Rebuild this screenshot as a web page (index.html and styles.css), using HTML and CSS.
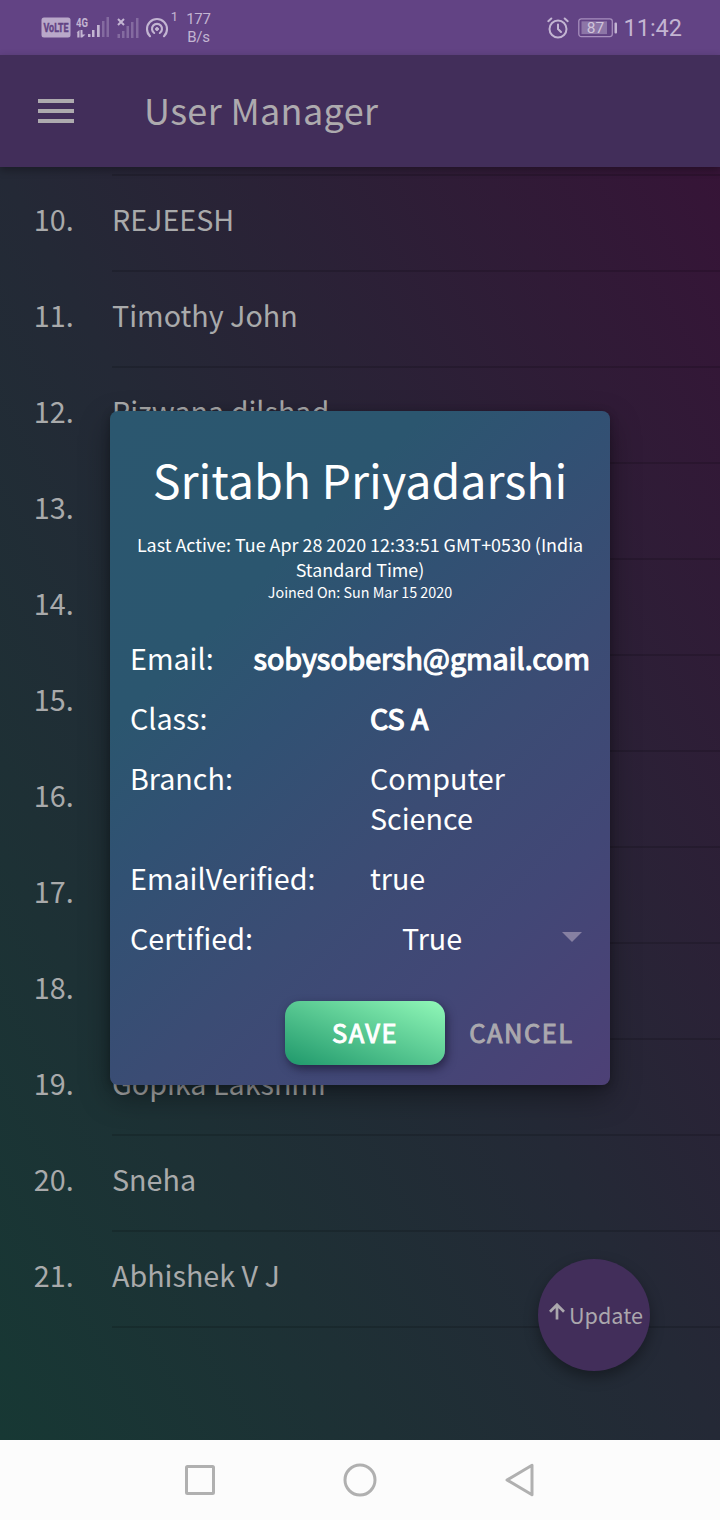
FILE: index.html
```html
<!DOCTYPE html>
<html lang="en">
<head>
<meta charset="utf-8">
<title>User Manager</title>
<link rel="stylesheet" href="styles.css">
</head>
<body>
<div class="screen">
  <header class="status">
    <div class="status-left">
      <svg class="volte" width="30" height="21" viewBox="0 0 30 21"><rect x="0.5" y="0.5" width="29" height="20" rx="2.5" fill="#b9a8c9"/><text x="2.500" y="14.600" textLength="25" lengthAdjust="spacingAndGlyphs" class="volte-text">VoLTE</text></svg>
      <svg class="signal-a" width="34" height="23" viewBox="0 0 34 23"><text x="0" y="10" textLength="12" lengthAdjust="spacingAndGlyphs" class="net-text">4G</text><g fill="#c3b5d2"><path d="M0.500 15.500l3-2.500v7.500h-2.200v-5zM4.500 13h2v4.500h3l-3.300 3h-1.700z"/><rect x="12" y="17" width="2.500" height="3"/><rect x="16" y="13" width="2.500" height="7"/><rect x="21" y="8" width="2.700" height="12"/></g><g fill="#846ba0"><rect x="26" y="4" width="2.500" height="16"/><rect x="30.500" y="0" width="2.500" height="20"/></g></svg>
      <svg class="signal-b" width="22" height="20" viewBox="0 0 22 20"><path d="M1 1l6 6M7 1l-6 6" stroke="#c3b5d2" stroke-width="2"/><g fill="#846ba0"><rect x="0.500" y="16" width="2.500" height="4"/><rect x="5" y="13" width="2.500" height="7"/><rect x="9.500" y="8" width="2.500" height="12"/><rect x="14" y="4" width="2.500" height="16"/><rect x="19" y="0" width="2.500" height="20"/></g></svg>
      <svg class="hotspot" width="24" height="22" viewBox="0 0 24 22" fill="none" stroke="#c3b5d2" stroke-width="2.100" stroke-linecap="round"><circle cx="12" cy="12" r="1.500" fill="#c3b5d2" stroke-width="1"/><path d="M9.200 16a5 5 0 1 1 5.600 0"/><path d="M5 19.200a10 10 0 1 1 14 0"/></svg>
      <span class="hot-count">1</span>
      <div class="speed"><span>177</span><span>B/s</span></div>
    </div>
    <div class="status-right">
      <svg width="22" height="22" viewBox="0 0 22 22" fill="none" stroke="#c3b5d2" stroke-width="2" stroke-linecap="round"><circle cx="11" cy="12" r="8.500"/><path d="M11 7.500v4.500l3 3M1.300 4.200l3-2.700M20.700 4.200l-3-2.700"/></svg>
      <svg class="battery" width="40" height="20" viewBox="0 0 40 20"><rect x="0.800" y="0.800" width="33.500" height="17.800" rx="2.500" fill="none" stroke="#a78fbd" stroke-width="1.300"/><rect x="3.500" y="3.300" width="25.500" height="12.800" fill="#8d76a7"/><rect x="36.500" y="4.500" width="2.500" height="11" rx="1" fill="#c3b5d2"/><text x="17.500" y="15" text-anchor="middle" class="battery-text">87</text></svg>
      <span class="clock">11:42</span>
    </div>
  </header>
  <div class="appbar">
    <svg width="36" height="24" viewBox="0 0 36 24" fill="#adaaae"><rect width="36" height="4"/><rect y="10" width="36" height="4"/><rect y="20" width="36" height="4"/></svg>
    <h1 class="app-title">User Manager</h1>
  </div>
  <main class="content">
    <ul class="list">
      <li class="row"><span class="num">10.</span><span class="name">REJEESH</span></li>
      <li class="row"><span class="num">11.</span><span class="name">Timothy John</span></li>
      <li class="row"><span class="num">12.</span><span class="name">Rizwana dilshad</span></li>
      <li class="row"><span class="num">13.</span><span class="name"></span></li>
      <li class="row"><span class="num">14.</span><span class="name"></span></li>
      <li class="row"><span class="num">15.</span><span class="name"></span></li>
      <li class="row"><span class="num">16.</span><span class="name"></span></li>
      <li class="row"><span class="num">17.</span><span class="name"></span></li>
      <li class="row"><span class="num">18.</span><span class="name"></span></li>
      <li class="row"><span class="num">19.</span><span class="name">Gopika Lakshmi</span></li>
      <li class="row"><span class="num">20.</span><span class="name">Sneha</span></li>
      <li class="row"><span class="num">21.</span><span class="name">Abhishek V J</span></li>
    </ul>
    <button class="fab"><svg width="16" height="17" viewBox="0 0 16 17" fill="none" stroke="#aba7ad" stroke-width="2.700"><path d="M8 16.500V2M1 8.700l7-7 7 7"/></svg><span>Update</span></button>
  </main>
  <nav class="navbar">
    <svg width="32" height="32" viewBox="0 0 32 32" fill="none" stroke="#b0b0b0" stroke-width="3"><rect x="2.500" y="2.500" width="27" height="27" rx="1"/></svg>
    <svg width="34" height="34" viewBox="0 0 34 34" fill="none" stroke="#b0b0b0" stroke-width="3"><circle cx="17" cy="17" r="15"/></svg>
    <svg width="32" height="34" viewBox="0 0 32 34" fill="none" stroke="#b0b0b0" stroke-width="3" stroke-linejoin="round"><path d="M28 2.200v29.600L3 17z"/></svg>
  </nav>
  <section class="dialog">
    <h2 class="person">Sritabh Priyadarshi</h2>
    <p class="active">Last Active: Tue Apr 28 2020 12:33:51 GMT+0530 (India<br>Standard Time)</p>
    <p class="joined">Joined On: Sun Mar 15 2020</p>
    <div class="fields">
      <div class="field field-email"><span>Email:</span><b class="strong">sobysobersh@gmail.com</b></div>
      <div class="field"><span>Class:</span><b class="strong">CS A</b></div>
      <div class="field"><span>Branch:</span><span>Computer<br>Science</span></div>
      <div class="field"><span>EmailVerified:</span><span>true</span></div>
      <div class="field"><span>Certified:</span><span class="select">True<i class="caret"></i></span></div>
    </div>
    <div class="actions"><button class="save">SAVE</button><button class="cancel">CANCEL</button></div>
  </section>
</div>
</body>
</html>
```

FILE: styles.css
```css
* { box-sizing: border-box; margin: 0; padding: 0; }
body { font-family: "Noto Sans CJK SC", "Noto Sans", sans-serif; }
button { border: 0; font-family: inherit; }
.screen { position: relative; width: 720px; height: 1520px; display: flex; flex-direction: column; overflow: hidden; }
.status { height: 55px; background: #624384; display: flex; justify-content: space-between; padding: 0 38px 0 41px; font-family: Roboto, sans-serif; color: #c3b5d2; }
.status-left, .status-right { display: flex; align-items: center; }
.volte { overflow: visible; }
.volte-text { font: bold 12px Roboto, sans-serif; fill: #624384; stroke: #624384; stroke-width: .4px; }
.net-text { font: bold 12px Roboto, sans-serif; fill: #c3b5d2; }
.signal-a { margin: 2px 0 0 5px; }
.signal-b { margin-left: 7px; }
.hotspot { margin-left: 6px; }
.hot-count { font-size: 13px; margin: -23px 0 0 1px; width: 9px; text-align: center; }
.speed { display: flex; flex-direction: column; align-items: center; font-size: 15px; line-height: 18px; width: 25px; margin-left: 7px; padding-top: 1px; letter-spacing: -.2px; }
.battery { margin-left: 9px; }
.battery-text { font: 15.5px Roboto, sans-serif; fill: #cfc4da; }
.clock { font-size: 23.5px; margin-left: 5px; }
.appbar { position: relative; z-index: 1; height: 112px; background: #422e5a; display: flex; align-items: center; padding-left: 38px; gap: 70px; box-shadow: 0 3px 8px rgba(0, 0, 0, .3); }
.app-title { font-size: 36px; font-weight: 400; letter-spacing: .35px; color: #adaaae; line-height: 56px; margin-top: -4px; }
.content { position: relative; height: 1273px; background: linear-gradient(to top right, #173834, #242936 50%, #361437); padding-top: 7px; }
.list { list-style: none; }
.list::before { content: ""; display: block; height: 2px; margin-left: 112px; background: rgba(0, 0, 0, .14); }
.row { height: 96px; display: flex; font-size: 28.7px; line-height: 86px; color: #a9aaab; }
.num { width: 112px; padding-left: 33.8px; }
.name { flex: 1; border-bottom: 2px solid rgba(0, 0, 0, .14); }
.fab { position: absolute; left: 538px; top: 1092px; width: 112px; height: 112px; border-radius: 50%; background: #422e5a; color: #aba7ad; font-size: 21.6px; display: flex; align-items: center; justify-content: center; gap: 4px; padding: 0 0 2px 4px; box-shadow: 0 6px 14px rgba(0, 0, 0, .35); }
.fab svg { flex: none; margin-top: -5px; }
.navbar { height: 80px; background: #fcfcfc; display: flex; justify-content: center; align-items: center; gap: 127px; }
.dialog { position: absolute; z-index: 2; left: 110px; top: 411px; width: 500px; height: 674px; border-radius: 8px; background: linear-gradient(135deg, #2b576f 0%, #2b566f 27%, #315173 41%, #3b4c74 60%, #424776 78%, #4d4076 100%); box-shadow: 0 12px 30px rgba(0, 0, 0, .35), 0 2px 8px rgba(0, 0, 0, .25); color: #fff; padding: 34px 20px 0; }
.person { font-size: 46.6px; line-height: 68px; font-weight: 400; text-align: center; white-space: nowrap; }
.active { font-size: 17.9px; line-height: 25px; text-align: center; white-space: nowrap; margin: 19px -10px 0; }
.joined { font-size: 14.35px; line-height: 20px; text-align: center; }
.fields { margin-top: 36px; display: flex; flex-direction: column; gap: 20px; }
.field { display: grid; grid-template-columns: 240px 1fr; font-size: 28.7px; line-height: 40px; white-space: nowrap; }
.field-email { display: flex; justify-content: space-between; }
.strong { font-weight: 400; -webkit-text-stroke: 1.2px #fff; letter-spacing: -.04px; }
.select { display: flex; justify-content: space-between; align-items: center; padding: 0 8px 0 32px; }
.caret { border: 10px solid transparent; border-top-color: #8680a2; border-bottom: 0; margin-top: -2px; }
.actions { display: flex; justify-content: flex-end; margin-top: 43px; }
.save { width: 160px; height: 64px; border-radius: 15px; background: linear-gradient(to top right, #1f986b, #91f8b8); box-shadow: 2px 4px 10px rgba(20, 15, 40, .6); color: #fff; }
.cancel { width: 145px; height: 64px; background: none; color: #aaa8ae; margin-left: 4px; margin-right: -4px; }
.save, .cancel { font-size: 25.5px; letter-spacing: 1.5px; padding-bottom: 3px; -webkit-text-stroke: 1px currentColor; }
```
